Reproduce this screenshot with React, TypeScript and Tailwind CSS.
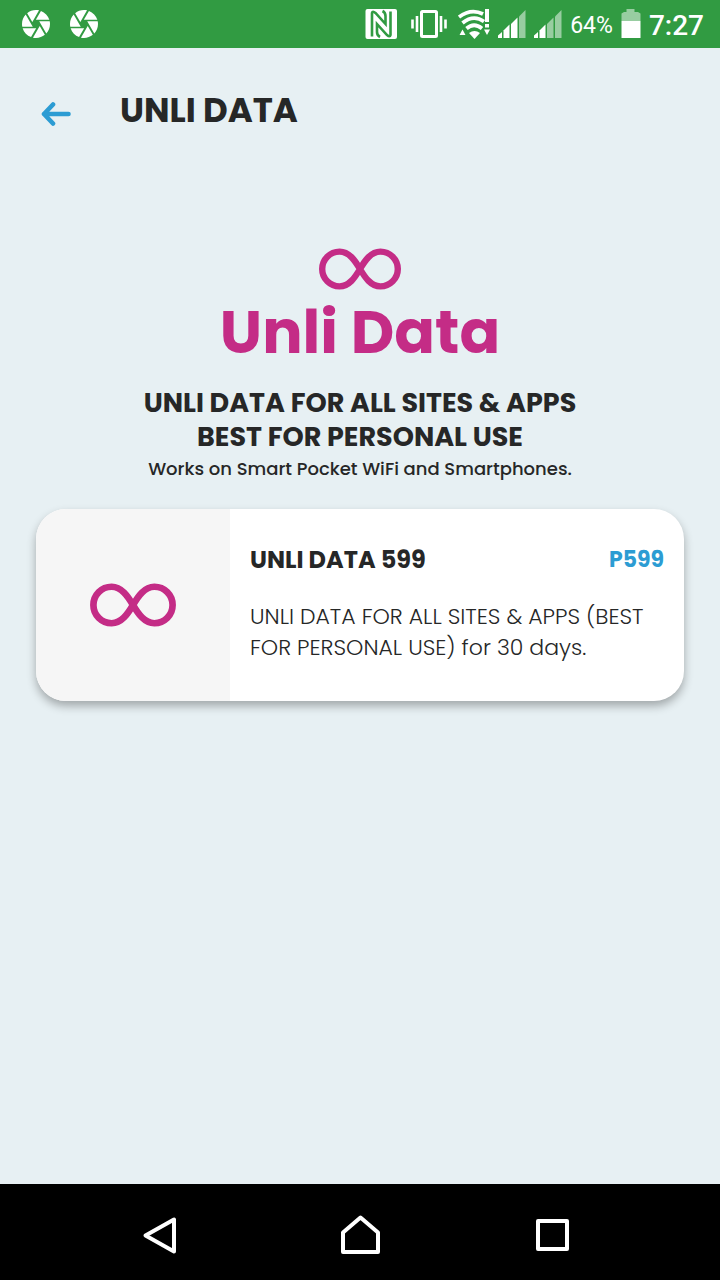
const InfinityIcon = ({ className }: { className: string }) => (
  <svg viewBox="0 0 82 42" className={className} fill="none" stroke="#C42C86" strokeWidth="6.4" aria-hidden="true">
    <path d="M41 21C36 12.5 30 3.6 20.6 3.6A17.4 17.4 0 0 0 20.6 38.4C30 38.4 36 29.5 41 21C46 12.5 52 3.6 61.4 3.6A17.4 17.4 0 0 1 61.4 38.4C52 38.4 46 29.5 41 21Z" />
  </svg>
);

const ApertureIcon = () => (
  <svg viewBox="2 2 20 20" className="w-7 h-7" fill="#FFF" aria-hidden="true">
    <path d="M9.4 10.5l4.77-8.26C13.47 2.09 12.75 2 12 2c-2.4 0-4.6.85-6.32 2.25l3.66 6.35.06-.1zM21.54 9c-.92-2.92-3.15-5.26-6-6.34L11.88 9h9.66zm.26 1h-7.49l.29.5 4.76 8.25C21 16.97 22 14.61 22 12c0-.69-.07-1.35-.2-2zM8.54 12l-3.9-6.75C3.01 7.03 2 9.39 2 12c0 .69.07 1.35.2 2h7.49l-1.15-2zm-6.08 3c.92 2.92 3.15 5.26 6 6.34L12.12 15H2.46zm11.27 0l-3.9 6.76c.7.15 1.42.24 2.17.24 2.4 0 4.6-.85 6.32-2.25l-3.66-6.35-.93 1.6z" />
  </svg>
);

const NfcIcon = () => (
  <svg viewBox="0 0 34 30" className="w-[34px] h-[30px]" aria-hidden="true">
    <rect x="0.5" width="31.5" height="30" rx="2" fill="#FFF" />
    <path
      d="M7 27.5V4Q7.5 1.5 10.5 4L20.5 15V7Q20.5 3.5 17.5 2M25.5 2.5V26Q25 28.5 22 26L12 15V23Q12 26.5 15 28"
      fill="none"
      stroke="#319B42"
      strokeWidth="2.6"
    />
  </svg>
);

const VibrateIcon = () => (
  <svg viewBox="0 0 43 28" className="w-[43px] h-7" fill="none" stroke="#FFF" aria-hidden="true">
    <rect x="14.5" y="1.5" width="15" height="25" rx="1" strokeWidth="3" />
    <path d="M10 6V22M34 6V22M5.5 9.5V18.5M38.5 9.5V18.5" strokeWidth="2.6" />
  </svg>
);

const WifiIcon = () => (
  <svg viewBox="0 0 32 30" className="w-8 h-[30px]" aria-hidden="true">
    <g fill="none" stroke="#FFF" strokeWidth="3.8">
      <path d="M1 8Q13 -1 25 5" />
      <path d="M4.5 14Q15.5 5 26 12.5" />
      <path d="M8.5 19.5Q16 13 24 19.5" />
    </g>
    <path d="M11 24Q16.5 20 22 24L16.5 30Z" fill="#FFF" />
    <path d="M27 0H31V13H27ZM27 15H31V18.5H27Z" fill="#FFF" />
    <path d="M1.5 26L4.5 20.5L7.5 26ZM26 20.5H32L29 26Z" fill="#FFF" />
  </svg>
);

const signalBars = [
  "M0 28V25.5L4 22V28Z",
  "M5.5 28V20.5L11.5 14.5V28Z",
  "M13 28V14L19.5 7.5V28Z",
  "M21 28V6.5L27.5 0V28Z",
];

const SignalIcon = ({ level }: { level: number }) => (
  <svg viewBox="0 0 28 28" className="w-7 h-7" aria-hidden="true">
    {signalBars.map((d, i) => (
      <path key={d} d={d} fill="#FFF" opacity={i < level ? 1 : 0.5} />
    ))}
  </svg>
);

const BatteryIcon = () => (
  <svg viewBox="0 0 20 30" className="w-5 h-[30px]" aria-hidden="true">
    <path d="M0.5 12V4.5L3 3H5.5V0H13.5V3H17L19.5 4.5V12Z" fill="#FFF" opacity="0.5" />
    <rect x="0.5" y="12" width="19" height="17" fill="#FFF" />
  </svg>
);

const StatusBar = () => (
  <div className="flex items-center justify-between h-12 pl-[22px] pr-4 bg-[#319B42] text-white font-['Roboto',sans-serif]">
    <div className="flex items-center gap-5">
      <ApertureIcon />
      <ApertureIcon />
    </div>
    <div className="flex items-center gap-2">
      <NfcIcon />
      <VibrateIcon />
      <WifiIcon />
      <div className="flex items-center gap-2">
        <SignalIcon level={3} />
        <SignalIcon level={2} />
      </div>
      <span className="pt-1 text-[23px] leading-[40px]">64%</span>
      <BatteryIcon />
      <span className="pt-1 text-[28px] leading-[40px] font-medium">7:27</span>
    </div>
  </div>
);

const Header = () => (
  <header className="flex items-center h-[124px] pl-[41px]">
    <button type="button" aria-label="Back" className="w-[79px] pt-2">
      <svg viewBox="0 0 30 24" className="w-[30px] h-6" fill="none" stroke="#2C9CD3" strokeWidth="4.6" strokeLinecap="round" strokeLinejoin="round">
        <path d="M3 12H27.5M12 2.5L3 12L12 21.5" />
      </svg>
    </button>
    <h1 className="text-[34px] leading-[40px] font-bold">UNLI DATA</h1>
  </header>
);

const PromoCard = () => (
  <section className="flex mx-9 mt-[25px] min-h-[192px] rounded-[30px] overflow-hidden bg-white shadow-[0_5px_10px_rgba(0,0,0,0.3)]">
    <div className="flex items-center justify-center w-[194px] shrink-0 bg-[#F6F6F6]">
      <InfinityIcon className="w-[86px] h-11" />
    </div>
    <div className="flex-1 px-5 pt-[35px] pb-9">
      <div className="flex items-center justify-between">
        <h3 className="text-[24px] leading-[32px] font-bold">UNLI DATA 599</h3>
        <span className="text-[22px] leading-[32px] font-bold text-[#2C9CD3]">P599</span>
      </div>
      <p className="mt-[25px] text-[22px] leading-[31px] font-light">
        UNLI DATA FOR ALL SITES &amp; APPS (BEST
        <br />
        FOR PERSONAL USE) for 30 days.
      </p>
    </div>
  </section>
);

const NavBar = () => (
  <nav className="flex items-center justify-around h-24 px-15 bg-black text-white">
    <button type="button" aria-label="Back">
      <svg viewBox="0 0 48 48" className="w-12 h-12" fill="none" stroke="currentColor" strokeWidth="4" strokeLinejoin="round">
        <path d="M38 11.5V43.5L9.5 27.5Z" />
      </svg>
    </button>
    <button type="button" aria-label="Home">
      <svg viewBox="0 0 48 48" className="w-12 h-12" fill="none" stroke="currentColor" strokeWidth="4" strokeLinejoin="round">
        <path d="M7 44V24.5L24.5 9.5L42 24.5V44Z" />
      </svg>
    </button>
    <button type="button" aria-label="Recent apps">
      <svg viewBox="0 0 48 48" className="w-12 h-12" fill="none" stroke="currentColor" strokeWidth="4" strokeLinejoin="round">
        <rect x="2" y="13" width="29" height="28" />
      </svg>
    </button>
  </nav>
);

const App = () => {
  return (
    <div className="flex flex-col min-h-screen bg-[#E7F0F3] text-[#262727] font-['Poppins','Inter',sans-serif]">
      <StatusBar />
      <Header />
      <main className="flex-1 pt-[76px]">
        <div className="flex flex-col items-center text-center">
          <InfinityIcon className="w-[82px] h-[42px]" />
          <p className="mt-3 text-[60px] leading-[60px] font-bold text-[#C42C86]">Unli Data</p>
          <h2 className="mt-6 text-[27px] leading-[34px] font-bold">
            UNLI DATA FOR ALL SITES &amp; APPS
            <br />
            BEST FOR PERSONAL USE
          </h2>
          <p className="text-[18px] leading-[30px] font-medium">
            Works on Smart Pocket WiFi and Smartphones.
          </p>
        </div>
        <PromoCard />
      </main>
      <NavBar />
    </div>
  );
};

export default App;
